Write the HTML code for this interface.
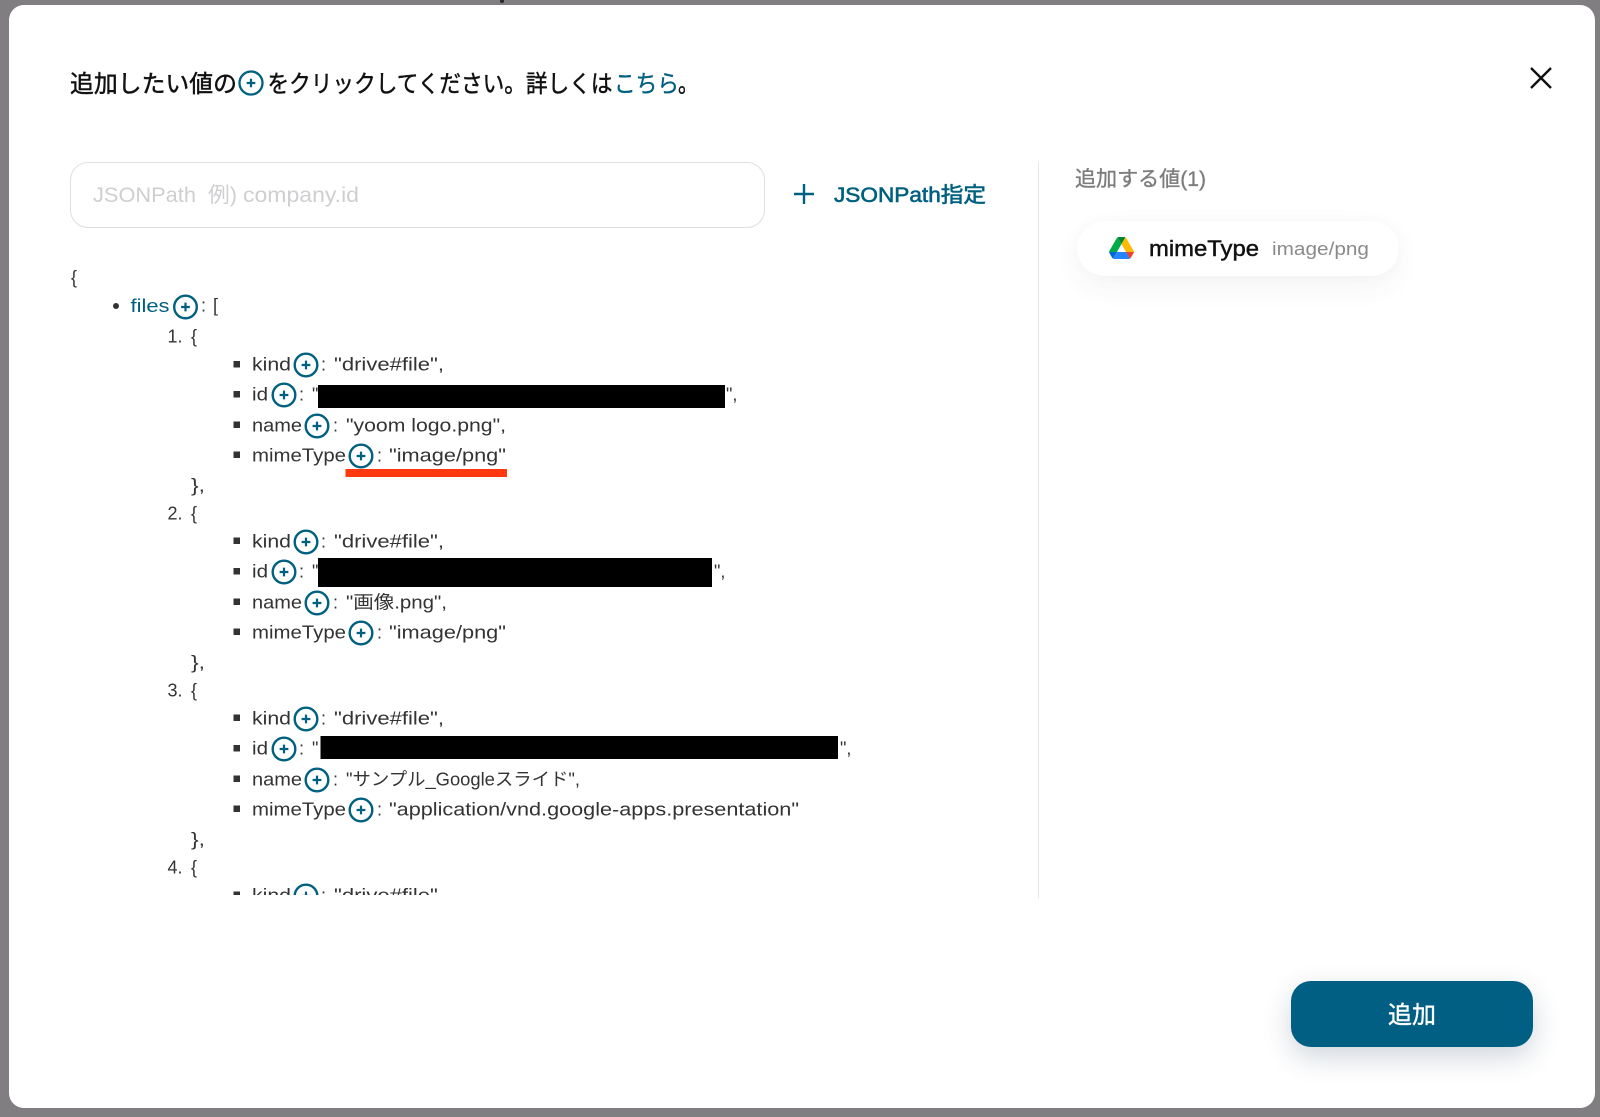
<!DOCTYPE html>
<html lang="ja">
<head>
<meta charset="utf-8">
<title>追加したい値</title>
<style>
html,body{margin:0;padding:0;width:1600px;height:1117px;overflow:hidden;background:#807e80}
#stray{position:absolute;left:500px;top:0;width:4px;height:3px;background:#2a2a2a;border-radius:0 0 2px 2px}
#modal{position:absolute;left:9px;top:5px;width:1586px;height:1103px;background:#fff;border-radius:15px}
#input{position:absolute;left:70px;top:162px;width:693px;height:64px;border:1px solid #dfdfe2;border-radius:18px;background:#fff}
#divider{position:absolute;left:1038px;top:162px;width:1px;height:736px;background:#e8e8ea}
#chip{position:absolute;left:1077px;top:221px;width:322px;height:55px;border-radius:28px;background:#fff;box-shadow:0 10px 28px rgba(60,60,90,.06),0 0 14px rgba(60,60,90,.02)}
#btn{position:absolute;left:1291px;top:981px;width:242px;height:66px;border-radius:20px;background:#025f84;box-shadow:0 10px 28px rgba(20,50,80,.2)}
svg{position:absolute;left:0;top:0}
text{font-family:"Liberation Sans","Noto Sans CJK JP",sans-serif;fill:#333;font-size:18px}
.ti{font-size:24px;fill:#111;stroke:#111;stroke-width:.45}
.li{fill:#00607f;stroke:#00607f}
.ph{font-size:21px;fill:#cfcfd2}
.j{font-size:21px;fill:#00607f;stroke:#00607f;stroke-width:.6}
.h{font-size:21px;fill:#7c7c7c;stroke:#7c7c7c;stroke-width:.35}
.m{font-size:22px;fill:#111;stroke:#111;stroke-width:.45}
.v{font-size:18.5px;fill:#8a8a8a}
.b{font-size:24px;fill:#fff;stroke:#fff;stroke-width:.4}
.t{fill:#00607f}
#tree text{transform:translateY(-.7px)}
</style>
</head>
<body>
<div id="stray"></div>
<div id="modal"></div>
<div id="input"></div>
<div id="divider"></div>
<div id="chip"></div>
<div id="btn"></div>
<svg width="1600" height="1117" viewBox="0 0 1600 1117" xmlns="http://www.w3.org/2000/svg">
<defs>
<g id="p" fill="none" stroke="#00607f">
<circle r="11.3" stroke-width="2.4"/>
<path d="M-4.4 0H4.4M0-4.4V4.4" stroke-width="2.2"/>
</g>
<clipPath id="c"><rect x="60" y="150" width="960" height="745"/></clipPath>
</defs>

<!-- title -->
<text class="ti" x="70" y="92" textLength="167" lengthAdjust="spacingAndGlyphs">追加したい値の</text>
<g transform="translate(251,83)"><circle r="11.5" fill="none" stroke="#00607f" stroke-width="2.3"/><path d="M-4.3 0H4.3M0-4.3V4.3" stroke="#00607f" stroke-width="2.2" fill="none"/></g>
<text class="ti" x="267.5" y="92" textLength="345" lengthAdjust="spacingAndGlyphs">をクリックしてください。詳しくは</text>
<text class="ti li" x="614" y="92" textLength="65" lengthAdjust="spacingAndGlyphs" style="stroke-width:.35">こちら</text>
<text class="ti" x="678" y="92" textLength="20" lengthAdjust="spacingAndGlyphs">。</text>

<!-- close -->
<path d="M1531 68L1551 88M1551 68L1531 88" stroke="#111" stroke-width="2.4" fill="none"/>

<!-- input -->
<text class="ph" x="93" y="202" textLength="103" lengthAdjust="spacingAndGlyphs">JSONPath</text>
<text class="ph" x="208" y="202" textLength="29" lengthAdjust="spacingAndGlyphs">例)</text>
<text class="ph" x="243" y="202" textLength="116" lengthAdjust="spacingAndGlyphs">company.id</text>

<!-- JSONPath button -->
<path d="M794 194H814M804 184V204" stroke="#00607f" stroke-width="2.4" fill="none"/>
<text class="j" x="834" y="202" textLength="152" lengthAdjust="spacingAndGlyphs">JSONPath指定</text>

<!-- right panel -->
<text class="h" x="1075" y="186" textLength="131" lengthAdjust="spacingAndGlyphs">追加する値(1)</text>
<svg x="1109" y="237" width="25" height="22" viewBox="0 0 87.3 78">
<path d="m6.6 66.85 3.85 6.65c.8 1.4 1.95 2.5 3.3 3.3l13.75-23.8h-27.5c0 1.55.4 3.1 1.2 4.5z" fill="#0066da"/>
<path d="m43.65 25-13.75-23.8c-1.35.8-2.5 1.9-3.3 3.3l-25.4 44a9.06 9.06 0 0 0 -1.2 4.5h27.5z" fill="#00ac47"/>
<path d="m73.55 76.8c1.35-.8 2.5-1.9 3.3-3.3l1.6-2.75 7.65-13.25c.8-1.4 1.2-2.95 1.2-4.5h-27.502l5.852 11.5z" fill="#ea4335"/>
<path d="m43.65 25 13.75-23.8c-1.35-.8-2.9-1.2-4.5-1.2h-18.5c-1.6 0-3.15.45-4.5 1.2z" fill="#00832d"/>
<path d="m59.8 53h-32.3l-13.75 23.8c1.35.8 2.9 1.2 4.5 1.2h50.8c1.6 0 3.15-.45 4.5-1.2z" fill="#2684fc"/>
<path d="m73.4 26.5-12.7-22c-.8-1.4-1.95-2.5-3.3-3.3l-13.75 23.8 16.15 28h27.45c0-1.55-.4-3.1-1.2-4.5z" fill="#ffba00"/>
</svg>
<text class="m" x="1149" y="256" textLength="110" lengthAdjust="spacingAndGlyphs">mimeType</text>
<text class="v" x="1272" y="255" textLength="97" lengthAdjust="spacingAndGlyphs">image/png</text>

<!-- button label -->
<text class="b" x="1388" y="1023" textLength="48" lengthAdjust="spacingAndGlyphs">追加</text>

<!-- JSON tree -->
<g id="tree" clip-path="url(#c)">
<text x="71" y="284">{</text>
<circle cx="116" cy="306" r="3" fill="#333"/>
<text class="t" x="130.5" y="312.5" textLength="39" lengthAdjust="spacingAndGlyphs">files</text>
<use href="#p" x="185.5" y="307"/>
<text x="201" y="312">:</text>
<text x="213" y="312">[</text>

<!-- item 1 -->
<text x="167.5" y="343" textLength="15" lengthAdjust="spacingAndGlyphs">1.</text><text x="191" y="343">{</text>
<rect x="233.5" y="361" width="6.5" height="6.5" fill="#333"/>
<text x="252" y="371" textLength="39" lengthAdjust="spacingAndGlyphs">kind</text><use href="#p" x="306" y="365"/><text x="321" y="371">:</text>
<text x="334" y="371" textLength="110" lengthAdjust="spacingAndGlyphs">"drive#file",</text>
<rect x="233.5" y="391" width="6.5" height="6.5" fill="#333"/>
<text x="252" y="401" textLength="16" lengthAdjust="spacingAndGlyphs">id</text><use href="#p" x="284" y="395"/><text x="299" y="401">:</text>
<text x="312" y="401">"</text>
<rect x="318" y="385" width="407" height="23" fill="#000"/>
<text x="726" y="401">",</text>
<rect x="233.5" y="421.5" width="6.5" height="6.5" fill="#333"/>
<text x="252" y="432" textLength="50" lengthAdjust="spacingAndGlyphs">name</text><use href="#p" x="317" y="426"/><text x="333" y="432">:</text>
<text x="346" y="432" textLength="160" lengthAdjust="spacingAndGlyphs">"yoom logo.png",</text>
<rect x="233.5" y="451.5" width="6.5" height="6.5" fill="#333"/>
<text x="252" y="462" textLength="94" lengthAdjust="spacingAndGlyphs">mimeType</text><use href="#p" x="361" y="456"/><text x="377" y="462">:</text>
<text x="389" y="462" textLength="117" lengthAdjust="spacingAndGlyphs">"image/png"</text>
<rect x="345.5" y="469" width="161.5" height="8" fill="#ff3810"/>
<text x="191" y="492" textLength="14" lengthAdjust="spacingAndGlyphs">},</text>

<!-- item 2 -->
<text x="167.5" y="520" textLength="15" lengthAdjust="spacingAndGlyphs">2.</text><text x="191" y="520">{</text>
<rect x="233.5" y="537.5" width="6.5" height="6.5" fill="#333"/>
<text x="252" y="548" textLength="39" lengthAdjust="spacingAndGlyphs">kind</text><use href="#p" x="306" y="542"/><text x="321" y="548">:</text>
<text x="334" y="548" textLength="110" lengthAdjust="spacingAndGlyphs">"drive#file",</text>
<rect x="233.5" y="568" width="6.5" height="6.5" fill="#333"/>
<text x="252" y="578" textLength="16" lengthAdjust="spacingAndGlyphs">id</text><use href="#p" x="284" y="572"/><text x="299" y="578">:</text>
<text x="312" y="578">"</text>
<rect x="318" y="558" width="394" height="29" fill="#000"/>
<text x="714" y="578">",</text>
<rect x="233.5" y="598.5" width="6.5" height="6.5" fill="#333"/>
<text x="252" y="609" textLength="50" lengthAdjust="spacingAndGlyphs">name</text><use href="#p" x="317" y="603"/><text x="333" y="609">:</text>
<text x="346" y="609" textLength="101" lengthAdjust="spacingAndGlyphs">"画像.png",</text>
<rect x="233.5" y="628.5" width="6.5" height="6.5" fill="#333"/>
<text x="252" y="639" textLength="94" lengthAdjust="spacingAndGlyphs">mimeType</text><use href="#p" x="361" y="633"/><text x="377" y="639">:</text>
<text x="389" y="639" textLength="117" lengthAdjust="spacingAndGlyphs">"image/png"</text>
<text x="191" y="669" textLength="14" lengthAdjust="spacingAndGlyphs">},</text>

<!-- item 3 -->
<text x="167.5" y="697" textLength="15" lengthAdjust="spacingAndGlyphs">3.</text><text x="191" y="697">{</text>
<rect x="233.5" y="714.5" width="6.5" height="6.5" fill="#333"/>
<text x="252" y="725" textLength="39" lengthAdjust="spacingAndGlyphs">kind</text><use href="#p" x="306" y="719"/><text x="321" y="725">:</text>
<text x="334" y="725" textLength="110" lengthAdjust="spacingAndGlyphs">"drive#file",</text>
<rect x="233.5" y="745" width="6.5" height="6.5" fill="#333"/>
<text x="252" y="755" textLength="16" lengthAdjust="spacingAndGlyphs">id</text><use href="#p" x="284" y="749"/><text x="299" y="755">:</text>
<text x="312" y="755">"</text>
<rect x="320.5" y="736" width="517.5" height="23" fill="#000"/>
<text x="840" y="755">",</text>
<rect x="233.5" y="775.5" width="6.5" height="6.5" fill="#333"/>
<text x="252" y="786" textLength="50" lengthAdjust="spacingAndGlyphs">name</text><use href="#p" x="317" y="780"/><text x="333" y="786">:</text>
<text x="346" y="786" textLength="234" lengthAdjust="spacingAndGlyphs">"サンプル_Googleスライド",</text>
<rect x="233.5" y="805.5" width="6.5" height="6.5" fill="#333"/>
<text x="252" y="816" textLength="94" lengthAdjust="spacingAndGlyphs">mimeType</text><use href="#p" x="361" y="810"/><text x="377" y="816">:</text>
<text x="389" y="816" textLength="410" lengthAdjust="spacingAndGlyphs">"application/vnd.google-apps.presentation"</text>
<text x="191" y="846" textLength="14" lengthAdjust="spacingAndGlyphs">},</text>

<!-- item 4 -->
<text x="167.5" y="874" textLength="15" lengthAdjust="spacingAndGlyphs">4.</text><text x="191" y="874">{</text>
<rect x="233.5" y="891.5" width="6.5" height="6.5" fill="#333"/>
<text x="252" y="902" textLength="39" lengthAdjust="spacingAndGlyphs">kind</text><use href="#p" x="306" y="896"/><text x="321" y="902">:</text>
<text x="334" y="902" textLength="110" lengthAdjust="spacingAndGlyphs">"drive#file",</text>
</g>
</svg>
</body>
</html>
